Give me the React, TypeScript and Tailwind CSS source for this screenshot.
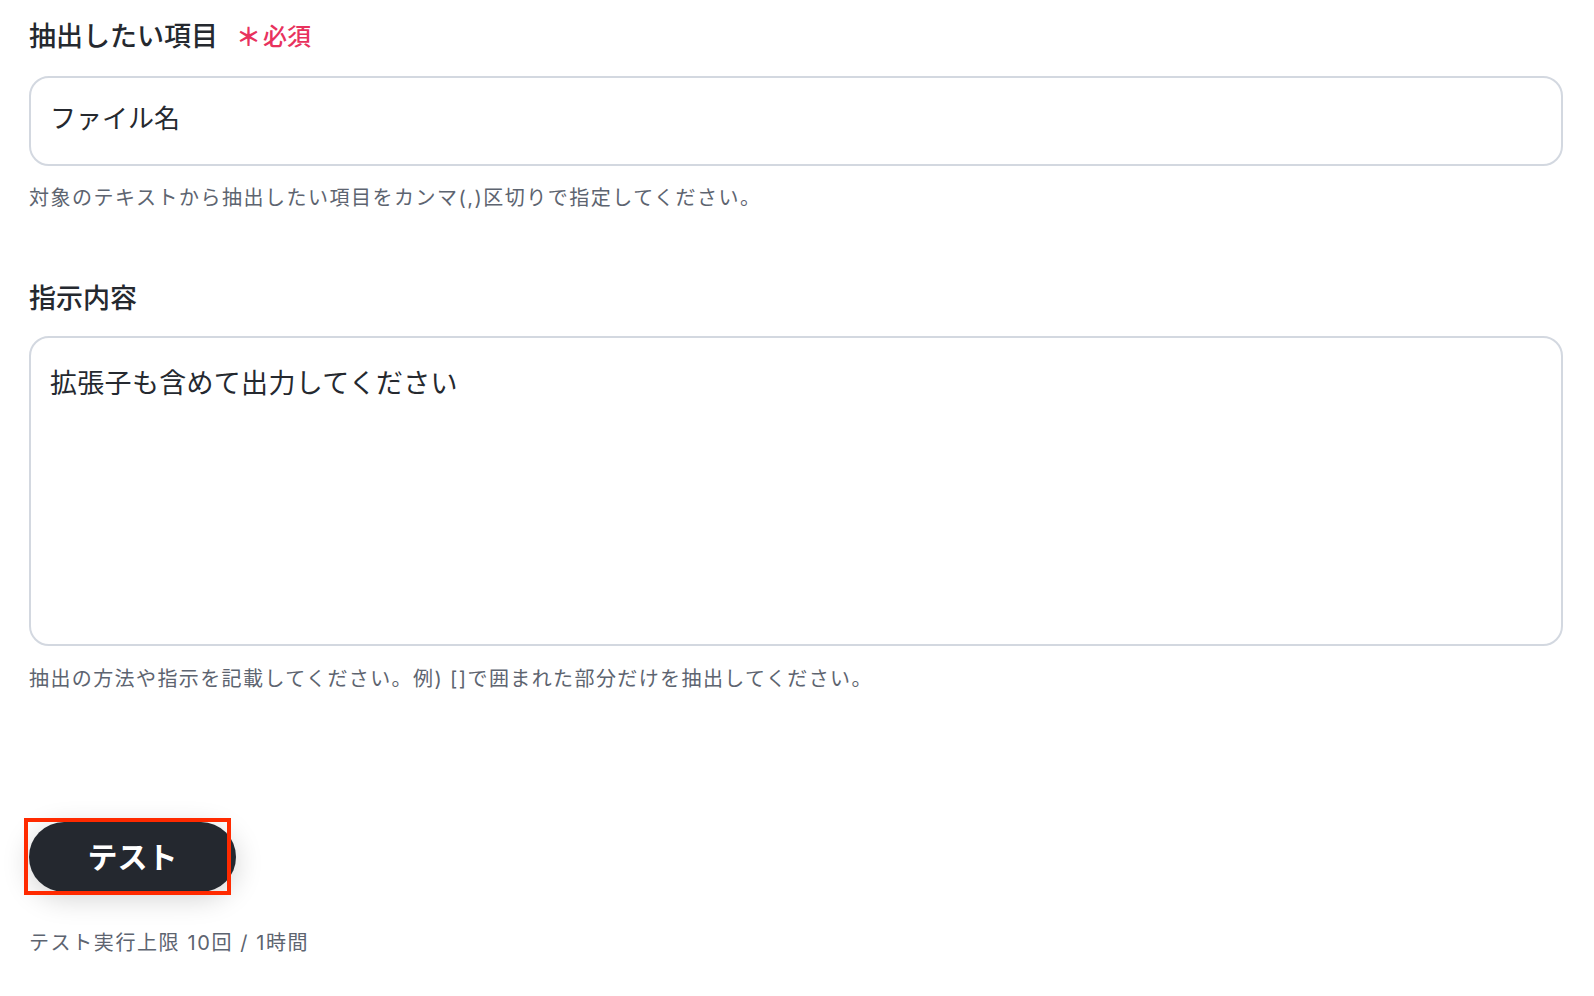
const font = "font-['Inter','Noto_Sans_CJK_JP',sans-serif]";

function Label({ children }: { children: React.ReactNode }) {
  return (
    <div className="flex h-[36px] items-center text-[27px] font-medium leading-[36px] text-[#25292f]">
      {children}
    </div>
  );
}

function Hint({ children, className = "" }: { children: React.ReactNode; className?: string }) {
  return (
    <p className={`text-[20px] leading-[28px] text-[#5d6470] ${className}`}>
      {children}
    </p>
  );
}

export default function App() {
  return (
    <div className={`min-h-screen bg-white pl-[29px] pr-[31px] pt-[19px] ${font}`}>
      <Label>
        <span>抽出したい項目</span>
        <span className="ml-[18px] text-[25px] font-bold text-[#e8325d]">＊</span>
        <span className="ml-[2px] text-[24px] font-medium text-[#e8325d]">必須</span>
      </Label>

      <div className="mt-[21px] h-[90px] rounded-[20px] border-2 border-[#d3d8e0] px-[19px] pt-[23px] text-[26px] leading-[36px] text-[#25292f]">
        ファイル名
      </div>
      <Hint className="mt-[18px] tracking-[1.5px]">
        対象のテキストから抽出したい項目をカンマ(,)区切りで指定してください。
      </Hint>

      <div className="mt-[69px]">
        <Label>指示内容</Label>
      </div>
      <div className="mt-[19px] h-[310px] rounded-[20px] border-2 border-[#d3d8e0] px-[19px] pt-[28px] text-[27px] leading-[36px] tracking-[0.3px] text-[#25292f]">
        拡張子も含めて出力してください
      </div>
      <Hint className="mt-[19px] tracking-[1.4px]">
        抽出の方法や指示を記載してください。例) []で囲まれた部分だけを抽出してください。
      </Hint>

      <div className="relative mt-[129px] w-fit">
        <button
          type="button"
          className="flex h-[70px] w-[207px] items-center justify-center rounded-full bg-[#24282f] text-[30px] font-bold text-white shadow-[0_6px_28px_rgba(0,0,0,0.18)]"
        >
          テスト
        </button>
        <span className="pointer-events-none absolute left-[-5px] top-[-4px] h-[77px] w-[207px] border-4 border-[#ff2a00]" />
      </div>

      <Hint className="mt-[37px] tracking-[1.6px]">テスト実行上限 10回 / 1時間</Hint>
    </div>
  );
}
